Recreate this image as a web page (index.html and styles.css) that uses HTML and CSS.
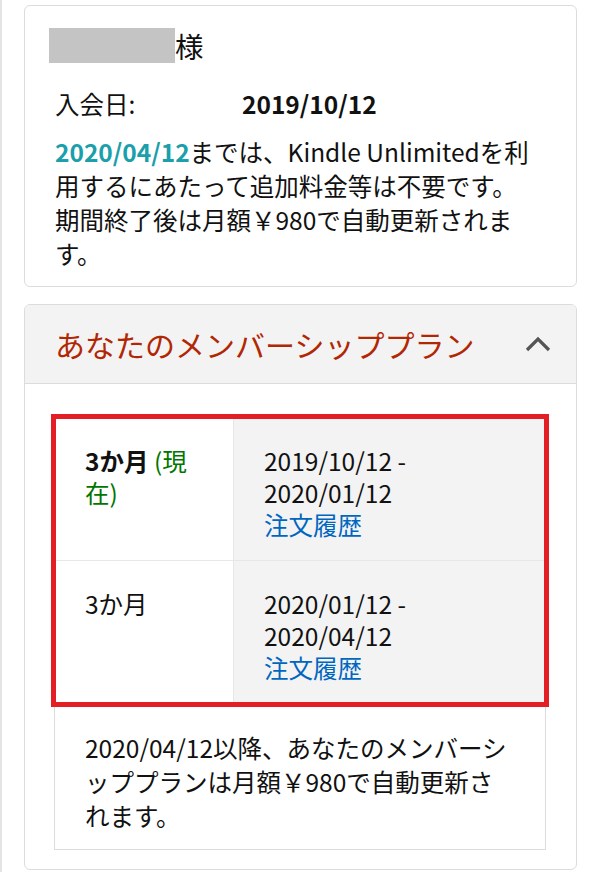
FILE: index.html
```html
<!DOCTYPE html>
<html lang="ja">
<head>
<meta charset="utf-8">
<title>Kindle Unlimited メンバーシップ</title>
<link rel="stylesheet" href="styles.css">
</head>
<body>
<div class="page">
  <section class="card account">
    <div class="name-row"><span class="redacted"></span><span class="honorific">様</span></div>
    <div class="joined"><span class="joined-label">入会日:</span><span class="joined-date">2019/10/12</span></div>
    <p class="free-note"><span class="teal">2020/04/12</span>までは、Kindle Unlimitedを利用するにあたって追加料金等は不要です。期間終了後は月額￥980で自動更新されます。</p>
  </section>

  <section class="card plan">
    <div class="plan-head">
      <h2 class="plan-title">あなたのメンバーシッププラン</h2>
      <svg class="chevron" width="26" height="16" viewBox="0 0 26 16"><polyline points="2,14 13,3 24,14" fill="none" stroke="#555" stroke-width="3.2" stroke-linejoin="miter"/></svg>
    </div>
    <div class="plan-body">
      <div class="plan-table">
        <div class="cell term first"><strong>3か月</strong> <span class="current">(現在)</span></div>
        <div class="cell period first">2019/10/12 - 2020/01/12<br><a class="link" href="#">注文履歴</a></div>
        <div class="cell term">3か月</div>
        <div class="cell period">2020/01/12 - 2020/04/12<br><a class="link" href="#">注文履歴</a></div>
      </div>
      <div class="renew-note">2020/04/12以降、あなたのメンバーシッププランは月額￥980で自動更新されます。</div>
    </div>
  </section>
</div>
</body>
</html>
```

FILE: styles.css
```css
html, body {
  margin: 0;
  padding: 0;
  background: #fff;
}
body {
  font-family: "Noto Sans CJK JP", "Noto Sans", sans-serif;
  color: #111;
  font-size: 24.5px;
}
.page {
  border-left: 2px solid #e4e4e4;
  padding: 5px 23px 0 22px;
  min-height: 867px;
}
.card {
  border: 1px solid #dcdcdc;
  border-radius: 6px;
  background: #fff;
}
.account {
  padding: 22px 38px 15px 30px;
}
.name-row {
  display: flex;
  align-items: center;
  height: 35px;
}
.redacted {
  display: inline-block;
  width: 126px;
  height: 35px;
  margin-left: -6px;
  background: #c4c4c4;
}
.honorific {
  font-size: 28.5px;
  line-height: 35px;
}
.joined {
  display: flex;
  margin-top: 24px;
  line-height: 34px;
}
.joined-label {
  width: 187px;
}
.joined-date {
  font-weight: 700;
}
.free-note {
  margin: 14px 0 0;
  line-height: 34px;
}
.teal {
  color: #1a9fab;
  font-weight: 700;
}
.plan {
  margin-top: 17px;
  overflow: hidden;
}
.plan-head {
  display: flex;
  align-items: center;
  justify-content: space-between;
  background: #f3f3f3;
  border-bottom: 1px solid #dcdcdc;
  padding: 19px 25px 19px 30px;
}
.plan-title {
  margin: 0;
  font-size: 30px;
  font-weight: 400;
  line-height: 40px;
  color: #b12704;
}
.chevron {
  display: block;
}
.plan-body {
  padding: 33px 30px 19px 29px;
}
.plan-table {
  display: grid;
  grid-template-columns: 178px 1fr;
  border: 1px solid #dcdcdc;
  outline: 5px solid #e41e25;
  outline-offset: -2px;
}
.cell {
  padding: 27px 30px 19px;
  line-height: 32px;
}
.cell.first {
  border-bottom: 1px solid #e7e7e7;
}
.period {
  background: #f3f3f3;
  border-left: 1px solid #e7e7e7;
}
.current {
  color: #007600;
}
.link {
  color: #0066c0;
  text-decoration: none;
}
.renew-note {
  border: 1px solid #dcdcdc;
  border-top: none;
  padding: 27px 33px 16px 30px;
  line-height: 34px;
}
```
